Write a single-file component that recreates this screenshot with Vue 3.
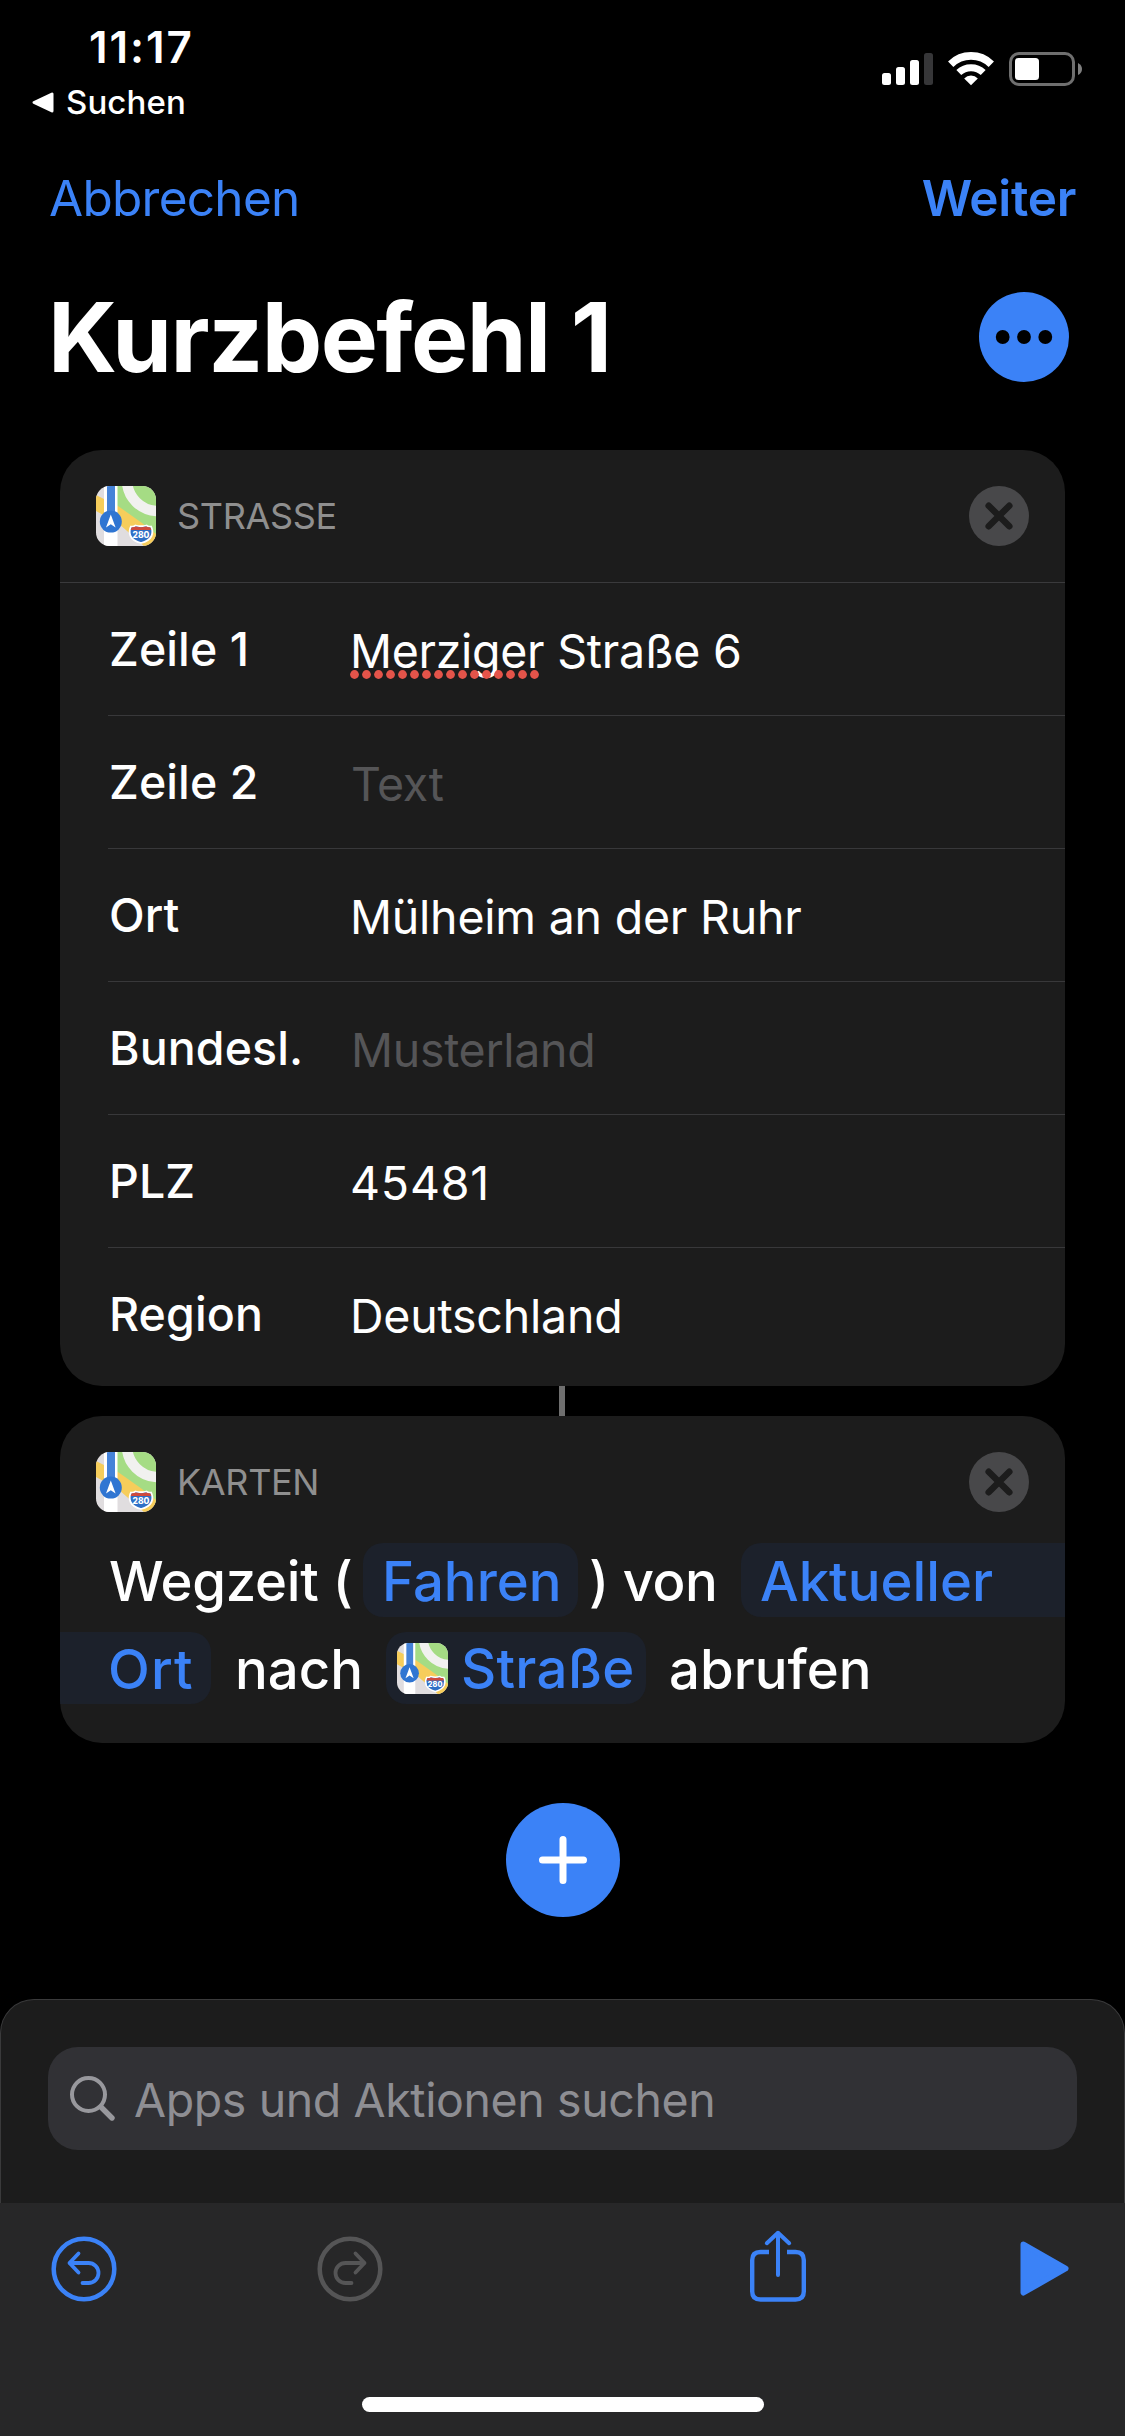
<script setup>
import { h } from 'vue'

const rows = [
  { label: 'Zeile 1', flagged: 'Merziger', value: 'Straße 6' },
  { label: 'Zeile 2', hint: 'Text' },
  { label: 'Ort', value: 'Mülheim an der Ruhr' },
  { label: 'Bundesl.', hint: 'Musterland' },
  { label: 'PLZ', value: '45481', digits: true },
  { label: 'Region', value: 'Deutschland' },
]

let uid = 0
const MapsIcon = {
  props: { size: { type: Number, default: 60 } },
  setup(props) {
    const clip = `maps-clip-${uid++}`
    return () =>
      h('svg', { width: props.size, height: props.size, viewBox: '0 0 60 60' }, [
        h('clipPath', { id: clip }, [h('rect', { width: 60, height: 60, rx: 13.5 })]),
        h('g', { 'clip-path': `url(#${clip})` }, [
          h('rect', { width: 60, height: 60, fill: '#e0dddf' }),
          h('path', { d: 'M20 0H60V52L20 20Z', fill: '#a5dc84' }),
          h('path', { d: 'M0 9L22 20L46 37L60 48V60H48L22 37L0 25Z', fill: '#f6cd5b' }),
          h('circle', { cx: 62, cy: -6, r: 31, fill: 'none', stroke: '#f1f1ef', 'stroke-width': 10.5 }),
          h('rect', { x: 8, width: 13.5, height: 60, fill: '#fff' }),
          h('rect', { x: 11, width: 8, height: 30, fill: '#4583d8' }),
          h('circle', { cx: 14.8, cy: 35.6, r: 11, fill: '#2f75d2' }),
          h('path', { d: 'M14.8 28.5L19.6 41.6L14.8 38.2L10 41.6Z', fill: '#fff' }),
          h('path', {
            d: 'M35 40.5Q37.5 41.2 39.5 39.5Q45 41 50.5 39.5Q52.5 41.2 55 40.5Q57.5 45 55.5 50Q53 55 45 57Q37 55 34.5 50Q32.5 45 35 40.5Z',
            fill: '#2f6fc6',
            stroke: '#fff',
            'stroke-width': 1.8,
          }),
          h('path', { d: 'M35.8 41.2Q37.5 41.6 39.7 40.6Q45 42 50.3 40.6Q52.5 41.6 54.2 41.2L55.3 44H34.7Z', fill: '#cf4a3c' }),
          h('text', {
            x: 45, y: 51.5, 'text-anchor': 'middle', 'font-family': 'Inter, sans-serif',
            'font-size': 8.5, 'font-weight': 800, fill: '#fff',
          }, '280'),
        ]),
      ])
  },
}
</script>

<template>
  <div class="screen">
    <header class="status">
      <div class="status-left">
        <span class="clock">11:17</span>
        <span class="back">
          <svg width="22" height="21" viewBox="0 0 22 21"><path d="M2 10.5L20 2V19Z" fill="#fff" stroke="#fff" stroke-width="3" stroke-linejoin="round" /></svg>
          Suchen
        </span>
      </div>
      <div class="status-right">
        <svg width="51" height="34" viewBox="0 0 51 34">
          <g fill="#fff">
            <rect x="0" y="21" width="9" height="12" rx="2.5" />
            <rect x="14" y="15" width="9" height="18" rx="2.5" />
            <rect x="28" y="8" width="9" height="25" rx="2.5" />
          </g>
          <rect x="42" y="1" width="9" height="32" rx="2.5" fill="#363638" />
        </svg>
        <svg class="wifi" width="46" height="34" viewBox="0 0 46 34" fill="none" stroke="#fff">
          <path d="M2.7 12.2A29 29 0 0 1 43.3 12.2" stroke-width="7.6" />
          <path d="M10.8 20.6A17.5 17.5 0 0 1 35.2 20.6" stroke-width="7" />
          <path d="M16.2 26.4A9.6 9.6 0 0 1 29.8 26.4L23 33.3Z" fill="#fff" stroke="none" />
        </svg>
        <svg width="73" height="34" viewBox="0 0 73 34">
          <rect x="1.5" y="1.5" width="63" height="31" rx="8.5" fill="none" stroke="#6f6f6f" stroke-width="3" />
          <rect x="6" y="6" width="24" height="22" rx="3.5" fill="#fff" />
          <path d="M69 11Q73 13 73 17T69 23Z" fill="#7f7f7f" />
        </svg>
      </div>
    </header>

    <nav class="nav">
      <span class="cancel">Abbrechen</span>
      <span class="next">Weiter</span>
    </nav>

    <div class="title-row">
      <h1>Kurzbefehl 1</h1>
      <svg width="90" height="90" viewBox="0 0 90 90">
        <circle cx="45" cy="45" r="45" fill="#3b82f7" />
        <circle cx="23.7" cy="45" r="6.9" />
        <circle cx="45" cy="45" r="6.9" />
        <circle cx="66.3" cy="45" r="6.9" />
      </svg>
    </div>

    <section class="card">
      <div class="card-head ruled">
        <MapsIcon />
        <span class="card-name strasse">STRASSE</span>
        <svg class="close" width="60" height="60" viewBox="0 0 60 60">
          <circle cx="30" cy="30" r="30" fill="#48484a" />
          <path d="M19.7 19.7L40.3 40.3M40.3 19.7L19.7 40.3" stroke="#1c1c1c" stroke-width="6.5" stroke-linecap="round" />
        </svg>
      </div>
      <div v-for="row in rows" :key="row.label" class="row">
        <span class="label">{{ row.label }}</span>
        <span v-if="row.hint" class="value hint">{{ row.hint }}</span>
        <span v-else class="value" :class="{ digits: row.digits }"><span v-if="row.flagged" class="flagged">{{ row.flagged }}<svg class="dots" width="192" height="9" viewBox="0 0 192 9"><circle v-for="n in 16" :key="n" :cx="n * 12 - 7.5" cy="4.5" r="4.4" fill="#e4544a" /></svg></span>{{ row.flagged ? ' ' : '' }}{{ row.value }}</span>
      </div>
    </section>

    <div class="link"></div>

    <section class="card action">
      <div class="card-head">
        <MapsIcon />
        <span class="card-name">KARTEN</span>
        <svg class="close" width="60" height="60" viewBox="0 0 60 60">
          <circle cx="30" cy="30" r="30" fill="#48484a" />
          <path d="M19.7 19.7L40.3 40.3M40.3 19.7L19.7 40.3" stroke="#1c1c1c" stroke-width="6.5" stroke-linecap="round" />
        </svg>
      </div>
      <div class="line first">
        <span class="word w-time">Wegzeit (</span>
        <span class="pill p-mode">Fahren</span>
        <span class="word w-from">) von</span>
        <span class="pill p-start">Aktueller</span>
      </div>
      <div class="line">
        <span class="pill p-end">Ort</span>
        <span class="word w-to">nach</span>
        <span class="pill p-dest"><MapsIcon :size="51" />Straße</span>
        <span class="word w-get">abrufen</span>
      </div>
    </section>

    <div class="add">
      <svg width="114" height="114" viewBox="0 0 114 114">
        <circle cx="57" cy="57" r="57" fill="#3b82f7" />
        <path d="M57 36.5V77.5M36.5 57H77.5" stroke="#fff" stroke-width="7" stroke-linecap="round" />
      </svg>
    </div>

    <section class="sheet">
      <div class="search">
        <svg width="46" height="46" viewBox="0 0 46 46" fill="none" stroke="#98989d" stroke-linecap="round">
          <circle cx="18.5" cy="18.5" r="16.5" stroke-width="4" />
          <path d="M31 31L42 42" stroke-width="5.4" />
        </svg>
        <span>Apps und Aktionen suchen</span>
      </div>
    </section>

    <footer class="toolbar">
      <svg class="undo" width="66" height="66" viewBox="0 0 66 66" fill="none" stroke="#3b82f7" stroke-width="4.5" stroke-linecap="round" stroke-linejoin="round">
        <circle cx="33" cy="33" r="30.3" />
        <path d="M27.5 17.5L18.5 27L27.5 36.500M18.5 27H37.5A10 10 0 0 1 37.5 47H31.5" stroke-width="3.8" />
      </svg>
      <svg class="redo" width="66" height="66" viewBox="0 0 66 66" fill="none" stroke="#555556" stroke-width="4.5" stroke-linecap="round" stroke-linejoin="round">
        <circle cx="33" cy="33" r="30.3" />
        <path d="M38.5 17.5L47.5 27L38.5 36.500M47.5 27H28.5A10 10 0 0 0 28.5 47H34.5" stroke-width="3.8" />
      </svg>
      <svg class="share" width="56" height="73" viewBox="0 0 56 73" fill="none" stroke="#3b82f7" stroke-width="4.4" stroke-linecap="round" stroke-linejoin="round">
        <path d="M19 22H10.5Q2.2 22 2.2 30V61.5Q2.2 69.5 10.5 69.5H45.5Q53.8 69.5 53.8 61.5V30Q53.8 22 45.5 22H37" stroke-linecap="butt" />
        <path d="M28 45V2.8M16.8 13.2L28 2.8L39.2 13.2" stroke-width="4" />
      </svg>
      <svg class="play" width="49" height="55" viewBox="0 0 49 55"><path d="M3.5 3.5L45.5 27.5L3.5 51.5Z" fill="#3b82f7" stroke="#3b82f7" stroke-width="6" stroke-linejoin="round" /></svg>
      <div class="home"></div>
    </footer>
  </div>
</template>

<style>
body {
  background: #000;
}
</style>

<style scoped>
.screen {
  width: 1125px;
  height: 2436px;
  background: #000;
  color: #fff;
  font-family: Inter, "Liberation Sans", sans-serif;
  display: flex;
  flex-direction: column;
  overflow: hidden;
  white-space: nowrap;
}
svg {
  display: block;
  flex: none;
}
.status {
  height: 150px;
  flex: none;
  display: flex;
  justify-content: space-between;
}
.status-left {
  display: flex;
  flex-direction: column;
  padding: 17px 0 0 32px;
}
.clock {
  font-size: 44px;
  font-weight: 600;
  line-height: 60px;
  letter-spacing: 1.9px;
  padding-left: 57px;
}
.back {
  display: flex;
  align-items: center;
  gap: 12px;
  font-size: 33px;
  font-weight: 500;
  line-height: 51px;
  letter-spacing: 0.1px;
}
.status-right {
  display: flex;
  align-items: flex-start;
  padding: 52px 43px 0 0;
}
.wifi {
  margin: 0 15px;
}
.nav {
  height: 96px;
  flex: none;
  display: flex;
  align-items: center;
  justify-content: space-between;
  padding: 0 49px;
  color: #3b82f7;
  font-size: 49.5px;
}
.cancel {
  letter-spacing: -0.73px;
}
.next {
  font-weight: 600;
  letter-spacing: -0.3px;
}
.title-row {
  height: 182px;
  flex: none;
  display: flex;
  align-items: center;
  justify-content: space-between;
  padding: 0 56px 0 48px;
}
h1 {
  margin: 0;
  font-size: 96px;
  font-weight: 700;
  letter-spacing: -1.5px;
}
.card {
  flex: none;
  margin: 22px 60px 0;
  height: 936px;
  background: #1c1c1c;
  border-radius: 42px;
  overflow: hidden;
}
.card-head {
  height: 132px;
  display: flex;
  align-items: center;
  padding: 0 36px;
}
.ruled {
  border-bottom: 1px solid #3a3a3c;
}
.card-name {
  margin-left: 21px;
  font-size: 36px;
  color: #8f8f8f;
  letter-spacing: -0.35px;
}
.close {
  margin-left: auto;
}
.row {
  height: 132px;
  margin-left: 48px;
  border-bottom: 1px solid #38383a;
  display: flex;
  align-items: center;
  font-size: 46.5px;
}
.row:last-child {
  border-bottom: 0;
}
.label {
  width: 242px;
  padding-left: 1px;
  box-sizing: border-box;
  font-weight: 500;
  letter-spacing: 0.1px;
}
.value {
  padding-top: 3px;
  letter-spacing: -0.22px;
}
.digits {
  letter-spacing: 0.8px;
}
.hint {
  color: #555557;
  padding-left: 1px;
  letter-spacing: -0.3px;
}
.flagged {
  position: relative;
  letter-spacing: -0.3px;
}
.dots {
  position: absolute;
  left: 0;
  bottom: 0;
}
.link {
  flex: none;
  width: 6px;
  height: 30px;
  margin-left: 559px;
  background: #6f6f6f;
}
.action {
  margin-top: 0;
  height: 327px;
}
.action .card-head {
  box-sizing: border-box;
  height: 127px;
  padding: 5px 36px 0;
}
.line {
  display: flex;
  height: 72px;
  line-height: 74px;
  font-size: 54.5px;
  font-weight: 500;
}
.line.first {
  height: 74px;
  line-height: 76px;
  margin-bottom: 15px;
}
.word,
.pill {
  display: block;
  flex: none;
  box-sizing: border-box;
}
.pill {
  color: #3b82f7;
  background: #1c212b;
  border-radius: 20px;
}
.w-time {
  width: 303px;
  padding-left: 49px;
  letter-spacing: -0.3px;
}
.p-mode {
  width: 215px;
  padding-left: 19px;
}
.w-from {
  width: 163px;
  padding-left: 11px;
  letter-spacing: -0.46px;
}
.p-start {
  width: 324px;
  padding-left: 19px;
  border-radius: 20px 0 0 20px;
}
.p-end {
  width: 151px;
  padding-left: 48px;
  border-radius: 0 20px 20px 0;
  letter-spacing: 1.1px;
}
.w-to {
  width: 175px;
  padding-left: 24px;
  letter-spacing: 0;
}
.p-dest {
  width: 260px;
  padding-left: 11px;
  display: flex;
  align-items: center;
  gap: 13px;
  letter-spacing: 0.3px;
}
.w-get {
  padding-left: 23px;
}
.add {
  flex: none;
  display: flex;
  justify-content: center;
  margin-top: 60px;
}
.sheet {
  flex: none;
  box-sizing: border-box;
  height: 204px;
  margin-top: 82px;
  padding: 47px 47px 0;
  background: #1c1c1c;
  border: 1px solid #3a3a3b;
  border-bottom: 0;
  border-radius: 34px 34px 0 0;
}
.search {
  height: 103px;
  display: flex;
  align-items: center;
  padding-left: 22px;
  background: #313135;
  border-radius: 30px;
  color: #8e8e93;
  font-size: 46.5px;
  letter-spacing: -0.4px;
}
.search span {
  margin-left: 18px;
  padding-top: 3px;
}
.toolbar {
  position: relative;
  flex: 1;
  display: flex;
  align-items: flex-start;
  background: #272728;
}
.undo {
  margin: 33px 0 0 51px;
}
.redo {
  margin: 33px 0 0 200px;
}
.share {
  margin: 27px 0 0 367px;
}
.play {
  margin: 38px 0 0 214px;
}
.home {
  position: absolute;
  left: 362px;
  bottom: 24px;
  width: 402px;
  height: 15px;
  border-radius: 8px;
  background: #fff;
}
</style>
